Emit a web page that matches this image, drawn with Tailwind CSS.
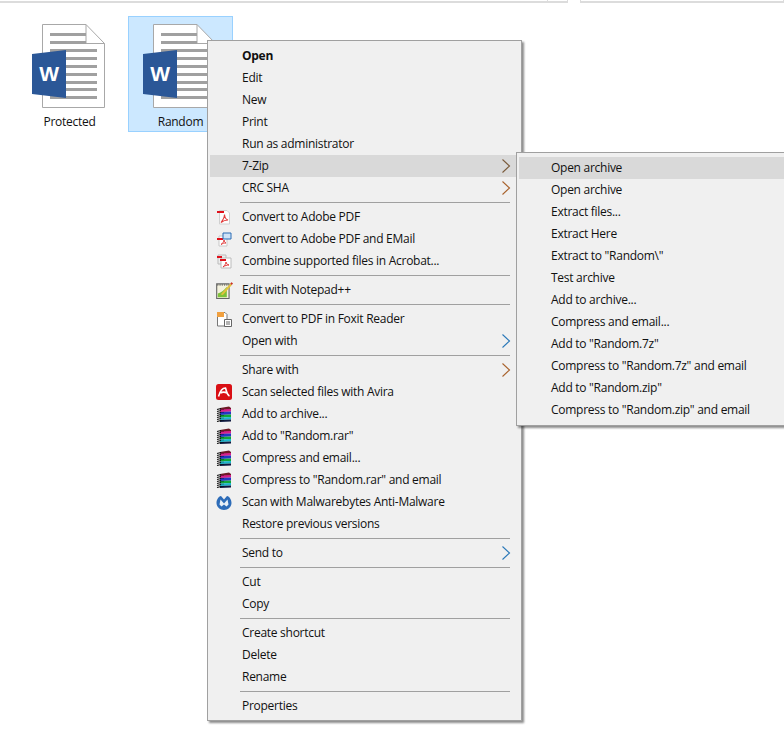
<!doctype html>
<html><head><meta charset="utf-8"><script src="https://cdn.jsdelivr.net/npm/@tailwindcss/browser@4"></script></head>
<body class="bg-white">
<svg width="0" height="0" class="absolute">
<defs>
<symbol id="word" viewBox="0 0 74 84">
<path d="M10.5 .5H54L72.5 19.500V83.500H10.500Z" fill="#fff" stroke="#a8a8a8"/>
<path d="M54 .5V19.500H72.500" fill="none" stroke="#a8a8a8"/>
<g fill="#a0a0a0"><rect x="18" y="9" width="36" height="3"/><rect x="18" y="17" width="36" height="3"/><rect x="18" y="25" width="47" height="3"/><rect x="18" y="33" width="47" height="3"/><rect x="18" y="41" width="47" height="3"/><rect x="18" y="49" width="47" height="3"/><rect x="18" y="57" width="47" height="3"/><rect x="18" y="64" width="47" height="3"/><rect x="18" y="72" width="47" height="3"/></g>
<path d="M0 30L34 26V74L0 70Z" fill="#2b5797"/>
<text x="17" y="57" text-anchor="middle" fill="#fff" font-family="Liberation Sans" font-weight="700" font-size="21">W</text>
</symbol>
<symbol id="rar" viewBox="0 0 16 16">
<path d="M4 2L13 .5 15 2V5L4 5.500z" fill="#6e1a26"/>
<path d="M4 3.500L15 3V5.500L4 6z" fill="#d81f8c"/>
<path d="M4 6L15 5.500V8.500L4 9z" fill="#2436c4"/>
<path d="M4 9L15 8.500V11L4 11.500z" fill="#12a838"/>
<path d="M4 11.500L15 11V13.500L4 14z" fill="#19b6cc"/>
<path d="M4 14L15 13.500V15.500L4 16z" fill="#101a40"/>
<path d="M4 3.500H8M4 6.500H8M4 9.500H8M4 12H8M4 14.500H8" stroke="#000" stroke-width=".5" opacity=".6"/>
<path d="M1 3.500L5 2.500M1 5.500L5 4.500M1 7.500L5 6.500M1 9.500L5 8.500M1 11.500L5 10.500M1 13.500L5 12.500M1 15.500L5 14.500" stroke="#111" stroke-width="1.100"/>
</symbol>
<symbol id="pdf" viewBox="0 0 16 16">
<path d="M3.500 1.500H11L13.500 4V15H3.500Z" fill="#fdfdfd" stroke="#d0d0d0"/>
<path d="M1 3h7" stroke="#e0101a" stroke-width="2"/>
<path d="M5 13.500C7 11 8.500 8 8.500 5.500 8.800 9 10 10.500 12 11 9.500 11 7.500 11.500 5 13.500Z" fill="none" stroke="#e23b3b" stroke-width="1.100"/>
</symbol>
<symbol id="chev" viewBox="0 0 10 16"><path d="M1.500 1.500L8.500 8 1.500 14.500" fill="none" stroke="currentColor" stroke-width="1.100"/></symbol>
</defs>
</svg>
<div class="relative w-[784px] h-[730px] overflow-hidden bg-white font-['Open_Sans',sans-serif] text-[12px] tracking-[-0.27px] text-[#111]">

<div class="flex h-[3px] items-stretch">
  <div class="w-[547px] border-b-2 border-[#dcdcdc]"></div>
  <div class="w-[21px] border-b-2 border-x border-[#dcdcdc]"></div>
  <div class="w-[12px]"></div>
  <div class="w-[204px] border-b-2 border-x border-[#dcdcdc]"></div>
</div>

<div class="flex gap-[6px] pl-[17px] pt-[13px]">
  <div class="w-[105px] h-[116px] flex flex-col items-center pt-[7px] border border-transparent">
    <svg class="w-[74px] h-[84px] shrink-0 ml-[-2px]"><use href="#word"/></svg>
    <div class="mt-[6px] leading-[16px]">Protected</div>
  </div>
  <div class="w-[105px] h-[116px] flex flex-col items-center pt-[7px] bg-[#cce8ff] border border-[#99d1ff]">
    <svg class="w-[74px] h-[84px] shrink-0 ml-[-2px]"><use href="#word"/></svg>
    <div class="mt-[6px] leading-[16px]">Random</div>
  </div>
</div>

<div class="absolute left-[207px] top-[40px] w-[315px] h-[681px] bg-[#f0f0f0] border border-[#a0a0a0] shadow-[2px_2px_2px_rgba(0,0,0,0.45)] px-[2px] pt-[4px]">
  <div class="h-[22px] flex items-center pl-[32px] font-bold">Open</div>
  <div class="h-[22px] flex items-center pl-[32px]">Edit</div>
  <div class="h-[22px] flex items-center pl-[32px]">New</div>
  <div class="h-[22px] flex items-center pl-[32px]">Print</div>
  <div class="h-[22px] flex items-center pl-[32px]">Run as administrator</div>
  <div class="h-[22px] flex items-center pl-[32px] bg-[#d9d9d9] relative">7-Zip<svg class="absolute left-[291px] top-[3px] w-[10px] h-[16px] text-[#7a5a3a]"><use href="#chev"/></svg></div>
  <div class="h-[22px] flex items-center pl-[32px] relative">CRC SHA<svg class="absolute left-[291px] top-[3px] w-[10px] h-[16px] text-[#a8622c]"><use href="#chev"/></svg></div>
  <div class="h-[7px] flex items-center pl-[30px] pr-[9px]"><div class="w-full h-px bg-[#a0a0a0]"></div></div>
  <div class="h-[22px] flex items-center"><svg class="w-[16px] h-[16px] ml-[6px] mr-[10px]"><use href="#pdf"/></svg>Convert to Adobe PDF</div>
  <div class="h-[22px] flex items-center relative"><svg class="w-[16px] h-[16px] ml-[6px] mr-[10px]" viewBox="0 0 16 16"><path d="M3 5h8v10H3z" fill="#fff" stroke="#c9c9c9"/><path d="M1 8h6" stroke="#e0101a" stroke-width="2"/><path d="M7 2h8v6H7z" fill="#cfe3f7" stroke="#2a6db5"/><path d="M5 13.500C7 12 8 10.500 8 9c.3 1.500 1 2.500 2 3-2 0-3 .3-5 1.500Z" fill="none" stroke="#e23b3b"/></svg>Convert to Adobe PDF and EMail</div>
  <div class="h-[22px] flex items-center"><svg class="w-[16px] h-[16px] ml-[6px] mr-[10px]" viewBox="0 0 16 16"><path d="M2 2h8v9H2z" fill="#ededed" stroke="#bbb"/><path d="M5 5h10v10H5z" fill="#fff" stroke="#bbb"/><path d="M1 4h5M4 7h6" stroke="#e0101a" stroke-width="2"/><path d="M7 14C9 12 10 10.500 10 9c.3 1.500 1 2.500 3 3-2 0-4 .5-6 2Z" fill="none" stroke="#e23b3b"/></svg>Combine supported files in Acrobat...</div>
  <div class="h-[7px] flex items-center pl-[30px] pr-[9px]"><div class="w-full h-px bg-[#a0a0a0]"></div></div>
  <div class="h-[22px] flex items-center"><svg class="w-[18px] h-[18px] ml-[5px] mr-[9px]" viewBox="0 0 16 16"><path d="M1.500 2.500h11v13h-11z" fill="#f4f2de" stroke="#666"/><path d="M2 3.500h10" stroke="#444" stroke-dasharray="1 1"/><path d="M2.500 11c3-1 6-3 8-6v9.500h-8z" fill="#7fc23a"/><path d="M5 12L13.500 2.500l1.500 1L7 12.500z" fill="#e3c23c"/><path d="M13.500 2.500l1.500 1 1-1.500-1.500-1z" fill="#c8321f"/></svg>Edit with Notepad++</div>
  <div class="h-[7px] flex items-center pl-[30px] pr-[9px]"><div class="w-full h-px bg-[#a0a0a0]"></div></div>
  <div class="h-[22px] flex items-center"><svg class="w-[16px] h-[16px] ml-[6px] mr-[10px]" viewBox="0 0 16 16"><path d="M1.500 1.500H9L11 3.500V15H1.500Z" fill="#fff" stroke="#777"/><path d="M1 1h7v5H1z" fill="#f0a040"/><path d="M8.500 8.500h7v7h-7z" fill="#fff" stroke="#666"/><path d="M10 11h4M10 13h4" stroke="#666"/></svg>Convert to PDF in Foxit Reader</div>
  <div class="h-[22px] flex items-center pl-[32px] relative">Open with<svg class="absolute left-[291px] top-[3px] w-[10px] h-[16px] text-[#2a78b8]"><use href="#chev"/></svg></div>
  <div class="h-[7px] flex items-center pl-[30px] pr-[9px]"><div class="w-full h-px bg-[#a0a0a0]"></div></div>
  <div class="h-[22px] flex items-center pl-[32px] relative">Share with<svg class="absolute left-[291px] top-[3px] w-[10px] h-[16px] text-[#a8622c]"><use href="#chev"/></svg></div>
  <div class="h-[22px] flex items-center"><svg class="w-[16px] h-[16px] ml-[6px] mr-[10px]" viewBox="0 0 16 16"><rect width="16" height="16" rx="2.500" fill="#d90f14"/><path d="M2.500 12.500C4 7 7 4 9.500 4 10.500 7 11 11 13.500 12M4.500 9C7 7.500 9 8 11 9" fill="none" stroke="#fff" stroke-width="1.600"/></svg>Scan selected files with Avira</div>
  <div class="h-[22px] flex items-center"><svg class="w-[16px] h-[16px] ml-[6px] mr-[10px]"><use href="#rar"/></svg>Add to archive...</div>
  <div class="h-[22px] flex items-center"><svg class="w-[16px] h-[16px] ml-[6px] mr-[10px]"><use href="#rar"/></svg>Add to "Random.rar"</div>
  <div class="h-[22px] flex items-center"><svg class="w-[16px] h-[16px] ml-[6px] mr-[10px]"><use href="#rar"/></svg>Compress and email...</div>
  <div class="h-[22px] flex items-center"><svg class="w-[16px] h-[16px] ml-[6px] mr-[10px]"><use href="#rar"/></svg>Compress to "Random.rar" and email</div>
  <div class="h-[22px] flex items-center"><svg class="w-[16px] h-[16px] ml-[6px] mr-[10px]" viewBox="0 0 16 16"><path d="M8 16C3.500 16 .5 12.500 .5 9 .5 5.500 2.500 2.500 5 2L8 5.500 11 2C13.500 2.500 15.500 5.500 15.500 9 15.500 12.500 12.500 16 8 16Z" fill="#2d6cb8"/><path d="M3.500 10.500L4.500 5.500 8 9.500 11.500 5.500 12.500 10.500 10.500 12.500 8 10.500 5.500 12.500Z" fill="#e9f0f7"/></svg>Scan with Malwarebytes Anti-Malware</div>
  <div class="h-[22px] flex items-center pl-[32px]">Restore previous versions</div>
  <div class="h-[7px] flex items-center pl-[30px] pr-[9px]"><div class="w-full h-px bg-[#a0a0a0]"></div></div>
  <div class="h-[22px] flex items-center pl-[32px] relative">Send to<svg class="absolute left-[291px] top-[3px] w-[10px] h-[16px] text-[#2a78b8]"><use href="#chev"/></svg></div>
  <div class="h-[7px] flex items-center pl-[30px] pr-[9px]"><div class="w-full h-px bg-[#a0a0a0]"></div></div>
  <div class="h-[22px] flex items-center pl-[32px]">Cut</div>
  <div class="h-[22px] flex items-center pl-[32px]">Copy</div>
  <div class="h-[7px] flex items-center pl-[30px] pr-[9px]"><div class="w-full h-px bg-[#a0a0a0]"></div></div>
  <div class="h-[22px] flex items-center pl-[32px]">Create shortcut</div>
  <div class="h-[22px] flex items-center pl-[32px]">Delete</div>
  <div class="h-[22px] flex items-center pl-[32px]">Rename</div>
  <div class="h-[7px] flex items-center pl-[30px] pr-[9px]"><div class="w-full h-px bg-[#a0a0a0]"></div></div>
  <div class="h-[22px] flex items-center pl-[32px]">Properties</div>
</div>

<div class="absolute left-[516px] top-[152px] w-[280px] h-[274px] bg-[#f0f0f0] border border-[#a0a0a0] shadow-[2px_2px_2px_rgba(0,0,0,0.45)] pl-[2px] pt-[4px]">
  <div class="h-[22px] flex items-center pl-[32px] bg-[#d9d9d9]">Open archive</div>
  <div class="h-[22px] flex items-center pl-[32px]">Open archive</div>
  <div class="h-[22px] flex items-center pl-[32px]">Extract files...</div>
  <div class="h-[22px] flex items-center pl-[32px]">Extract Here</div>
  <div class="h-[22px] flex items-center pl-[32px]">Extract to "Random\"</div>
  <div class="h-[22px] flex items-center pl-[32px]">Test archive</div>
  <div class="h-[22px] flex items-center pl-[32px]">Add to archive...</div>
  <div class="h-[22px] flex items-center pl-[32px]">Compress and email...</div>
  <div class="h-[22px] flex items-center pl-[32px]">Add to "Random.7z"</div>
  <div class="h-[22px] flex items-center pl-[32px]">Compress to "Random.7z" and email</div>
  <div class="h-[22px] flex items-center pl-[32px]">Add to "Random.zip"</div>
  <div class="h-[22px] flex items-center pl-[32px]">Compress to "Random.zip" and email</div>
</div>
</div>
</body></html>
